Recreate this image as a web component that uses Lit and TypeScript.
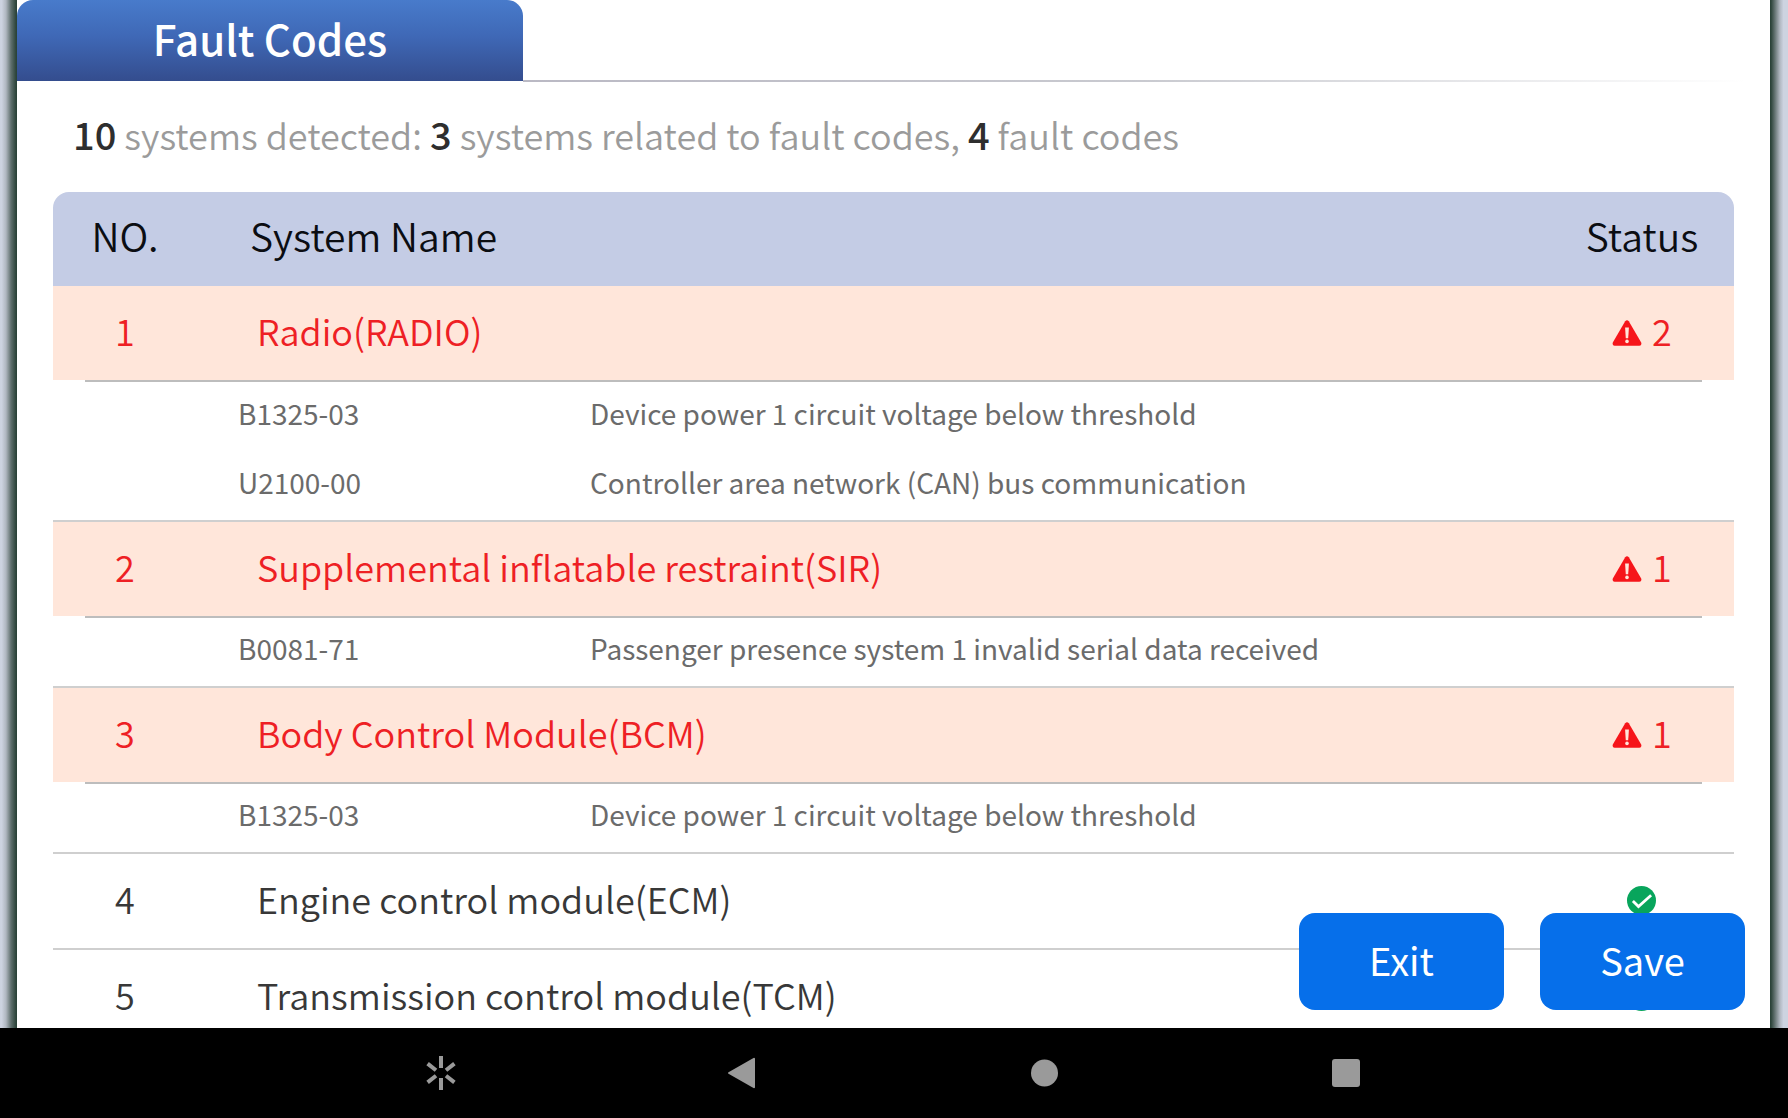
import { LitElement, html, css, svg, nothing } from "lit";
import { customElement, property } from "lit/decorators.js";

interface Fault {
  code: string;
  text: string;
}

interface SystemEntry {
  no: number;
  name: string;
  faults: Fault[];
}

const SYSTEMS: SystemEntry[] = [
  {
    no: 1,
    name: "Radio(RADIO)",
    faults: [
      { code: "B1325-03", text: "Device power 1 circuit voltage below threshold" },
      { code: "U2100-00", text: "Controller area network (CAN) bus communication" },
    ],
  },
  {
    no: 2,
    name: "Supplemental inflatable restraint(SIR)",
    faults: [{ code: "B0081-71", text: "Passenger presence system 1 invalid serial data received" }],
  },
  {
    no: 3,
    name: "Body Control Module(BCM)",
    faults: [{ code: "B1325-03", text: "Device power 1 circuit voltage below threshold" }],
  },
  { no: 4, name: "Engine control module(ECM)", faults: [] },
  { no: 5, name: "Transmission control module(TCM)", faults: [] },
];

const warningIcon = html`<svg class="icon" viewBox="0 0 30 26" width="30" height="26" aria-hidden="true">
  <path d="M13.2 1.2Q15-.8 16.8 1.2L29.2 22.6Q30 25.6 27.4 25.8H2.6Q0 25.6.8 22.6Z" fill="#f6151a" />
  <path d="M13.1 7.4h3.8l-.7 10.8h-2.4z" fill="#ffe6da" />
  <circle cx="15" cy="21.4" r="1.8" fill="#ffe6da" />
</svg>`;

const okIcon = html`<svg class="icon" viewBox="0 0 30 30" width="30" height="30" aria-hidden="true">
  <circle cx="14.5" cy="14.5" r="14.5" fill="#08a55c" />
  <path d="M5.9 14.9 11.5 20.5 24.1 9.3" fill="none" stroke="#fff" stroke-width="2.8" />
</svg>`;

/** Table of scanned systems, with the fault codes listed under each faulty one. */
@customElement("fault-table")
export class FaultTable extends LitElement {
  @property({ attribute: false }) systems: SystemEntry[] = [];

  static styles = css`
    :host {
      display: block;
    }
    .table {
      width: 100%;
      table-layout: fixed;
      border-collapse: separate;
      border-spacing: 0;
      color: #383838;
    }
    .col-no {
      width: 144px;
    }
    .col-code {
      width: 393px;
    }
    .col-status {
      width: 184px;
    }
    th,
    td {
      padding: 0;
      font-weight: 400;
      text-align: left;
      box-sizing: border-box;
      vertical-align: middle;
      white-space: nowrap;
    }
    .head th {
      height: 94px;
      padding-bottom: 8px;
      font-size: 39px;
      line-height: 56px;
      font-weight: 350;
      color: #0b0d12;
      background: #c4cce5;
    }
    .head th:first-child {
      border-top-left-radius: 16px;
    }
    .head th:last-child {
      border-top-right-radius: 16px;
    }
    .head .name {
      padding-left: 53px;
    }
    .system td {
      height: 96px;
      padding-bottom: 6px;
      font-size: 36px;
      line-height: 52px;
      font-weight: 350;
      border-bottom: 2px solid #cfcfcf;
    }
    .system .name {
      padding-left: 60px;
    }
    .faulty {
      color: #ee2024;
      background:
        linear-gradient(#bdbdbd, #bdbdbd) 50% 100% / calc(100% - 64px) 2px no-repeat,
        linear-gradient(#ffe6da, #ffe6da) 0 0 / 100% calc(100% - 2px) no-repeat;
    }
    .faulty td {
      border-bottom-color: transparent;
    }
    .fault td {
      height: 70px;
      padding-bottom: 8px;
      font-size: 28px;
      line-height: 40px;
      color: #6b6b6b;
    }
    .fault .code {
      padding-left: 41px;
    }
    .last td {
      border-bottom: 2px solid #cfcfcf;
    }
    .no.no,
    .status.status {
      text-align: center;
    }
    .system .status {
      padding-bottom: 0;
    }
    .mark {
      display: flex;
      align-items: center;
      justify-content: center;
      gap: 10px;
    }
    .count {
      padding-bottom: 6px;
    }
    .icon {
      display: block;
      flex: none;
    }
  `;

  render() {
    return html`
      <table class="table">
        <colgroup>
          <col class="col-no" />
          <col class="col-code" />
          <col />
          <col class="col-status" />
        </colgroup>
        <thead>
          <tr class="head">
            <th class="no" scope="col">NO.</th>
            <th class="name" scope="col" colspan="2">System Name</th>
            <th class="status" scope="col">Status</th>
          </tr>
        </thead>
        <tbody>
          ${this.systems.map((s) => this.renderSystem(s))}
        </tbody>
      </table>
    `;
  }

  private renderSystem(s: SystemEntry) {
    const count = s.faults.length;
    return html`
      <tr class="system ${count ? "faulty" : ""}">
        <td class="no">${s.no}</td>
        <td class="name" colspan="2">${s.name}</td>
        <td class="status">
          <span class="mark">${count ? warningIcon : okIcon}${count ? html`<span class="count">${count}</span>` : nothing}</span>
        </td>
      </tr>
      ${s.faults.map(
        (f, i) => html`
          <tr class="fault ${i === count - 1 ? "last" : ""}">
            <td></td>
            <td class="code">${f.code}</td>
            <td colspan="2">${f.text}</td>
          </tr>
        `
      )}
    `;
  }
}

const NAV_SHAPES = [
  {
    label: "Shortcuts",
    shape: svg`<g stroke="#9a9a9a" stroke-width="4" fill="none">
      <path d="M20 3v12M20 25v12" />
      <path d="M6.6 10.6 15 17.2M33.4 10.6 25 17.2M6.6 29.4 15 22.8M33.4 29.4 25 22.8" />
    </g>`,
  },
  {
    label: "Back",
    shape: svg`<path d="M6 20 31 5.8V34.2Z" fill="#9a9a9a" stroke="#9a9a9a" stroke-width="2" stroke-linejoin="round" />`,
  },
  { label: "Home", shape: svg`<circle cx="19.5" cy="20" r="13.5" fill="#9a9a9a" />` },
  { label: "Recent apps", shape: svg`<rect x="5" y="6" width="28" height="28" rx="3" fill="#9a9a9a" />` },
];

@customElement("app-root")
export class AppRoot extends LitElement {
  static styles = css`
    :host {
      display: flex;
      flex-direction: column;
      height: 100vh;
      overflow: hidden;
      font-family: "Noto Sans CJK SC", "Noto Sans", sans-serif;
      background: #000;
    }
    .screen {
      position: relative;
      flex: 1;
      min-height: 0;
      display: grid;
      grid-template-columns: 17px minmax(0, 1fr) 18px;
      background: #fff;
    }
    .edge-left {
      background: linear-gradient(to right, #cdd3e0 10%, #b0b7c0 35%, #5f6f6d 65%, #2b4339 95%);
    }
    .edge-right {
      background: linear-gradient(to left, #cdd3e0 25%, #b0b7c0 45%, #5f6f6d 75%, #2b4339 95%);
    }
    .panel {
      min-height: 0;
      overflow: hidden;
      display: flex;
      flex-direction: column;
    }
    .tabs {
      display: flex;
      align-items: flex-end;
      flex: none;
    }
    .tab {
      width: 506px;
      height: 81px;
      box-sizing: border-box;
      margin: 0;
      padding-bottom: 5px;
      display: flex;
      align-items: center;
      justify-content: center;
      border-radius: 16px 16px 0 0;
      background: linear-gradient(#487bcb, #3f68b6 45%, #344d8e);
      color: #fff;
      font-size: 42px;
      line-height: 48px;
      font-weight: 500;
    }
    .rule {
      flex: 1;
      height: 2px;
      margin-bottom: -1px;
      background: linear-gradient(to right, #bab9c4, #c9cad0 50%, #fff 98%);
    }
    .summary {
      flex: none;
      margin: 0;
      padding: 23px 56px 28px;
      font-size: 36px;
      line-height: 60px;
      font-weight: 350;
      color: #9b9b9b;
    }
    .summary strong {
      font-size: 38px;
      font-weight: 500;
      color: #2e2e2e;
    }
    .list {
      margin: 0 36px;
    }
    .actions {
      position: absolute;
      right: 43px;
      bottom: 18px;
      display: flex;
      gap: 36px;
    }
    .action {
      width: 205px;
      height: 97px;
      padding: 0 0 4px;
      border: 0;
      border-radius: 16px;
      background: #066fea;
      color: #fff;
      font: inherit;
      font-size: 38px;
      cursor: pointer;
    }
    .nav {
      flex: none;
      height: 90px;
      display: grid;
      grid-template-columns: repeat(4, minmax(0, 302px));
      justify-content: center;
      background: #000;
    }
    .nav-button {
      display: flex;
      align-items: center;
      justify-content: center;
      padding: 0;
      border: 0;
      background: none;
      cursor: pointer;
    }
  `;

  render() {
    return html`
      <main class="screen">
        <div class="edge-left"></div>
        <section class="panel">
          <header class="tabs">
            <h1 class="tab">Fault Codes</h1>
            <div class="rule"></div>
          </header>
          <p class="summary">
            <strong>10</strong> systems detected: <strong>3</strong> systems related to fault codes,
            <strong>4</strong> fault codes
          </p>
          <fault-table class="list" .systems=${SYSTEMS}></fault-table>
        </section>
        <div class="edge-right"></div>
        <div class="actions">
          <button class="action" type="button">Exit</button>
          <button class="action" type="button">Save</button>
        </div>
      </main>
      <nav class="nav">
        ${NAV_SHAPES.map(
          (n) => html`<button class="nav-button" type="button" aria-label=${n.label}>
            <svg viewBox="0 0 40 40" width="40" height="40" aria-hidden="true">${n.shape}</svg>
          </button>`
        )}
      </nav>
    `;
  }
}
